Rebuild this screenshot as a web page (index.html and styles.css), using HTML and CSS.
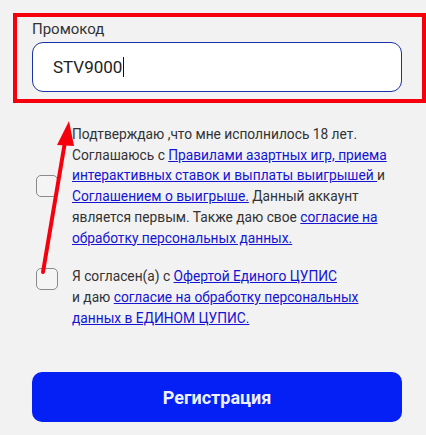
FILE: index.html
```html
<!DOCTYPE html>
<html>
<head>
    <meta charset="utf-8">
    <link rel="stylesheet" href="styles.css">
</head>
<body>
    <form class="reg-form">
        <!-- Promo code -->
        <div class="promo">
            <label class="promo-label">Промокод</label>
            <div class="promo-input">STV9000<span class="caret"></span></div>
        </div>

        <!-- Agreements -->
        <div class="agree agree-main">
            <span class="check"></span>
            <p class="agree-text">
                Подтверждаю ,что мне исполнилось 18 лет. Соглашаюсь с <a href="#">Правилами азартных игр, приема интерактивных ставок и выплаты выигрышей </a>и <a href="#">Соглашением о выигрыше.</a> Данный аккаунт является первым. Также даю свое <a href="#">согласие на обработку персональных данных.</a>
            </p>
        </div>

        <div class="agree agree-cupis">
            <span class="check"></span>
            <p class="agree-text">
                Я согласен(а) с <a href="#">Офертой Единого ЦУПИС</a><br>
                и даю <a href="#">согласие на обработку персональных данных в ЕДИНОМ ЦУПИС.</a>
            </p>
        </div>

        <button class="submit" type="button">Регистрация</button>
    </form>

    <!-- Annotation overlay -->
    <div class="mark-box"></div>
    <svg class="mark-arrow" width="426" height="435" viewBox="0 0 426 435">
        <line x1="43" y1="272" x2="66" y2="136" stroke="#f5000c" stroke-width="4" stroke-linecap="round"/>
        <polygon points="69,121 57,145 74,146" fill="#f5000c"/>
    </svg>
</body>
</html>
```

FILE: styles.css
```css
body {
    margin: 0;
    background: #f2f2f3;
    font-family: Roboto, "Liberation Sans", sans-serif;
    color: #333;
}

.reg-form {
    width: 370px;
    padding: 20px 0 0 32px;
}

/* Promo code */
.promo-label {
    display: block;
    font-size: 15px;
    line-height: 18px;
    color: #333;
    margin-bottom: 4px;
}

.promo-input {
    box-sizing: border-box;
    height: 50px;
    border: 1px solid #1b32a8;
    border-radius: 11px;
    background: #fff;
    padding: 0 20px;
    display: flex;
    align-items: center;
    font-size: 17px;
    color: #222;
}

.caret {
    display: inline-block;
    width: 1px;
    height: 20px;
    background: #111;
    margin-left: 1px;
}

/* Agreements */
.agree {
    display: flex;
    margin-left: 4px;
}
.agree-main {
    align-items: center;
    margin-top: 32px;
}
.agree-cupis {
    align-items: flex-start;
    margin-top: 18px;
}

.check {
    flex: none;
    box-sizing: border-box;
    width: 22px;
    height: 22px;
    border: 1.5px solid #8a8a8a;
    border-radius: 5px;
    background: #f4f4f4;
    margin-right: 14px;
}
.agree-cupis .check {
    margin-top: 2px;
}

.agree-text {
    margin: 0;
    font-size: 13.75px;
    line-height: 20.7px;
    color: #333;
}
.agree-text a {
    color: #1414d2;
    text-decoration: underline;
}

/* Submit */
.submit {
    display: block;
    width: 370px;
    height: 50px;
    margin-top: 44px;
    border: 0;
    border-radius: 10px;
    background: #0420f5;
    color: #eef0ff;
    font-family: Roboto, "Liberation Sans", sans-serif;
    font-size: 18px;
    font-weight: 700;
}

/* Annotation */
.mark-box {
    position: absolute;
    left: 13px;
    top: 13px;
    width: 413px;
    height: 90px;
    box-sizing: border-box;
    border: 4px solid #f5000c;
}
.mark-arrow {
    position: absolute;
    left: 0;
    top: 0;
    pointer-events: none;
}
```
